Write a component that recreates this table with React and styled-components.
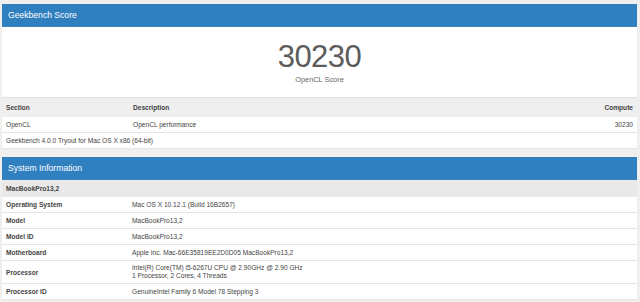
import React from "react";
import styled, { createGlobalStyle } from "styled-components";

const GlobalStyle = createGlobalStyle`
  html, body {
    margin: 0;
    padding: 0;
    background-color: #efefef;
    font-family: "Liberation Sans", Arial, sans-serif;
  }
`;

const systemRows = [
  { label: "Operating System", value: ["Mac OS X 10.12.1 (Build 16B2657)"] },
  { label: "Model", value: ["MacBookPro13,2"] },
  { label: "Model ID", value: ["MacBookPro13,2"] },
  { label: "Motherboard", value: ["Apple Inc. Mac-66E35819EE2D0D05 MacBookPro13,2"] },
  {
    label: "Processor",
    value: [
      "Intel(R) Core(TM) i5-6267U CPU @ 2.90GHz @ 2.90 GHz",
      "1 Processor, 2 Cores, 4 Threads",
    ],
  },
  { label: "Processor ID", value: ["GenuineIntel Family 6 Model 78 Stepping 3"] },
];

export default function App() {
  return (
    <>
      <GlobalStyle />
      <Page>
        <Panel>
          <PanelHeader>Geekbench Score</PanelHeader>
          <ScoreBox>
            <ScoreValue>30230</ScoreValue>
            <ScoreLabel>OpenCL Score</ScoreLabel>
          </ScoreBox>
          <HeadRow>
            <Cell>Section</Cell>
            <Cell>Description</Cell>
            <Cell $right>Compute</Cell>
          </HeadRow>
          <Row>
            <Cell>OpenCL</Cell>
            <Cell>OpenCL performance</Cell>
            <Cell $right>30230</Cell>
          </Row>
          <Row>
            <FullCell>Geekbench 4.0.0 Tryout for Mac OS X x86 (64-bit)</FullCell>
          </Row>
        </Panel>
        <Panel>
          <PanelHeader>System Information</PanelHeader>
          <GroupRow>MacBookPro13,2</GroupRow>
          {systemRows.map((r) => (
            <InfoRow key={r.label} $tall={r.value.length > 1}>
              <InfoLabel>{r.label}</InfoLabel>
              <InfoValue>
                {r.value.map((line) => (
                  <div key={line}>{line}</div>
                ))}
              </InfoValue>
            </InfoRow>
          ))}
        </Panel>
      </Page>
    </>
  );
}

const Page = styled.div`
  display: flex;
  flex-direction: column;
  gap: 8px;
  padding: 4px 3px 0 2px;
`;

const Panel = styled.div`
  display: flex;
  flex-direction: column;
`;

const PanelHeader = styled.div`
  height: 22px;
  background-color: #3080bf;
  color: #ffffff;
  font-size: 8.6px;
  display: flex;
  align-items: center;
  padding-left: 6px;
  border-bottom: 1px solid #3a86c3;
`;

const ScoreBox = styled.div`
  height: 71px;
  background-color: #ffffff;
  display: flex;
  flex-direction: column;
  align-items: center;
  padding-top: 14px;
  box-sizing: border-box;
  border-bottom: 1px solid #e2e2e2;
`;

const ScoreValue = styled.div`
  font-size: 31px;
  line-height: 31px;
  color: #5c5c5c;
  letter-spacing: -0.5px;
`;

const ScoreLabel = styled.div`
  font-size: 7.4px;
  color: #666666;
  margin-top: 3px;
`;

const HeadRow = styled.div`
  height: 19px;
  display: grid;
  grid-template-columns: 127px 1fr auto;
  align-items: center;
  padding: 0 4px;
  font-size: 6.6px;
  font-weight: bold;
  color: #444444;
`;

const Row = styled.div`
  height: 15px;
  display: grid;
  grid-template-columns: 127px 1fr auto;
  align-items: center;
  padding: 0 4px;
  background-color: #ffffff;
  border-bottom: 1px solid #e6e6e6;
  font-size: 6.6px;
  color: #444444;
`;

const Cell = styled.div`
  text-align: ${(p) => (p.$right ? "right" : "left")};
`;

const FullCell = styled.div`
  grid-column: 1 / -1;
`;

const GroupRow = styled.div`
  height: 17px;
  display: flex;
  align-items: center;
  padding-left: 4px;
  background-color: #e9e9e9;
  font-size: 6.6px;
  font-weight: bold;
  color: #444444;
`;

const InfoRow = styled.div`
  height: ${(p) => (p.$tall ? "22px" : "15px")};
  display: grid;
  grid-template-columns: 126px 1fr;
  align-items: center;
  padding-left: 4px;
  background-color: #ffffff;
  border-bottom: 1px solid #e6e6e6;
  font-size: 6.6px;
  color: #444444;
`;

const InfoLabel = styled.div`
  font-weight: bold;
`;

const InfoValue = styled.div`
  line-height: 8px;
`;
